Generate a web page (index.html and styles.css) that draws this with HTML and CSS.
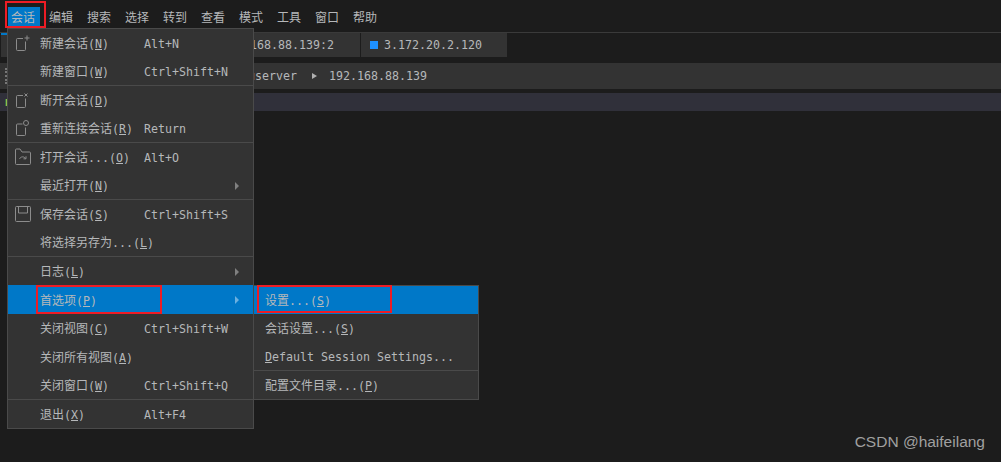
FILE: index.html
```html
<!DOCTYPE html>
<html lang="zh">
<head>
<meta charset="utf-8">
<title>会话菜单</title>
<link rel="stylesheet" href="styles.css">
</head>
<body>
<div class="app">
  <nav class="menubar">
    <span class="top active">会话</span><span class="top">编辑</span><span class="top">搜索</span><span class="top">选择</span><span class="top">转到</span><span class="top">查看</span><span class="top">模式</span><span class="top">工具</span><span class="top">窗口</span><span class="top">帮助</span>
  </nav>
  <div class="tabs">
    <div class="tab tab-active"></div>
    <div class="tab tab-first">192.168.88.139:2</div>
    <div class="tab tab-second"><i class="dot"></i>3.172.20.2.120</div>
  </div>
  <div class="crumbs"><i class="grip"></i><span>userver</span><i class="crumb-arrow"></i><span>192.168.88.139</span></div>
  <div class="current-line">r</div>
</div>

<div class="menu main-menu">
  <div class="item"><svg class="icon" viewBox="0 0 18 18"><path d="M8 4.500H2.500a1 1 0 0 0-1 1v10a1 1 0 0 0 1 1h7a1 1 0 0 0 1-1V7.500M12 1.500v5M9.500 4h5"/></svg><span class="label"><span class="zh">新建会话</span>(<u>N</u>)</span><span class="key">Alt+N</span></div>
  <div class="item"><span class="label"><span class="zh">新建窗口</span>(<u>W</u>)</span><span class="key">Ctrl+Shift+N</span></div>
  <div class="sep"></div>
  <div class="item"><svg class="icon" viewBox="0 0 18 18"><path d="M8 4.500H2.500a1 1 0 0 0-1 1v10a1 1 0 0 0 1 1h7a1 1 0 0 0 1-1V7.500M9.500 2.500l3 3M12.500 2.500l-3 3"/></svg><span class="label"><span class="zh">断开会话</span>(<u>D</u>)</span></div>
  <div class="item"><svg class="icon" viewBox="0 0 18 18"><path d="M7.500 5H2.500a1 1 0 0 0-1 1v9.500a1 1 0 0 0 1 1h7a1 1 0 0 0 1-1V8.500"/><circle cx="11" cy="4" r="2.500"/></svg><span class="label"><span class="zh">重新连接会话</span>(<u>R</u>)</span><span class="key">Return</span></div>
  <div class="sep"></div>
  <div class="item"><svg class="icon" viewBox="0 0 18 18"><path d="M.5 2a1 1 0 0 1 1-1h3.500l2 3h7.500a1 1 0 0 1 1 1v10.500a1 1 0 0 1-1 1H1.500a1 1 0 0 1-1-1zM4.500 11c1-2.500 4.500-3 6-.5M11 8.300v2.500H8.500"/></svg><span class="label"><span class="zh">打开会话</span>...(<u>O</u>)</span><span class="key">Alt+O</span></div>
  <div class="item"><span class="label"><span class="zh">最近打开</span>(<u>N</u>)</span><i class="arrow"></i></div>
  <div class="sep"></div>
  <div class="item"><svg class="icon" viewBox="0 0 18 18"><path d="M1.500 1.500h13a1 1 0 0 1 1 1v13a1 1 0 0 1-1 1h-13a1 1 0 0 1-1-1v-13a1 1 0 0 1 1-1zM3.500 1.500v6.500h9v-6.500"/></svg><span class="label"><span class="zh">保存会话</span>(<u>S</u>)</span><span class="key">Ctrl+Shift+S</span></div>
  <div class="item"><span class="label"><span class="zh">将选择另存为</span>...(<u>L</u>)</span></div>
  <div class="sep"></div>
  <div class="item"><span class="label"><span class="zh">日志</span>(<u>L</u>)</span><i class="arrow"></i></div>
  <div class="item selected"><span class="label"><span class="zh">首选项</span>(<u>P</u>)</span><i class="arrow"></i></div>
  <div class="item"><span class="label"><span class="zh">关闭视图</span>(<u>C</u>)</span><span class="key">Ctrl+Shift+W</span></div>
  <div class="item tall"><span class="label"><span class="zh">关闭所有视图</span>(<u>A</u>)</span></div>
  <div class="item"><span class="label"><span class="zh">关闭窗口</span>(<u>W</u>)</span><span class="key">Ctrl+Shift+Q</span></div>
  <div class="sep"></div>
  <div class="item"><span class="label"><span class="zh">退出</span>(<u>X</u>)</span><span class="key">Alt+F4</span></div>
</div>

<div class="menu sub-menu">
  <div class="item selected"><span class="label"><span class="zh">设置</span>...(<u>S</u>)</span></div>
  <div class="item"><span class="label"><span class="zh">会话设置</span>...(<u>S</u>)</span></div>
  <div class="item"><span class="label"><u>D</u>efault Session Settings...</span></div>
  <div class="sep"></div>
  <div class="item"><span class="label"><span class="zh">配置文件目录</span>...(<u>P</u>)</span></div>
</div>

<div class="mark mark-top"></div>
<div class="mark mark-pref"></div>
<div class="mark mark-settings"></div>
<div class="watermark">CSDN @haifeilang</div>
</body>
</html>
```
FILE: styles.css
```css
* { box-sizing: border-box; }
html, body { margin: 0; height: 100%; overflow: hidden; }
body {
  background: #1c1c1c;
  color: #b6b8ba;
  font-family: "DejaVu Sans Mono", "Noto Sans CJK SC", monospace;
  font-size: 11.63px;
  position: relative;
}
.zh { font-size: 12px; line-height: 1; font-family: "Noto Sans CJK SC", sans-serif; }

.menubar {
  height: 32px;
  display: flex;
  padding: 7px 0 0 6px;
  font-family: "Noto Sans CJK SC", sans-serif;
  font-size: 12px;
}
.top { width: 38px; height: 20px; line-height: 20px; padding-left: 5px; }
.top.active { background: #0078c8; width: 32px; margin: 0 4px 0 2px; padding-left: 3px; }

.tabs { height: 25px; border-top: 1px solid #3a3a3a; display: flex; padding-left: 1px; gap: 1px; }
.tab { background: #333333; height: 24px; line-height: 23px; display: flex; align-items: center; }
.tab-active { width: 100px; box-shadow: inset 0 2px 0 #0078c8; }
.tab-first { width: 258px; justify-content: flex-end; padding-right: 26px; }
.tab-second { width: 146px; padding-left: 9px; }
.dot { width: 8px; height: 8px; background: #1e90ff; margin-right: 6px; }

.crumbs {
  margin-top: 6px;
  height: 26px;
  background: #333333;
  display: flex;
  align-items: center;
  padding-left: 5px;
}
.grip { width: 2px; height: 16px; border-left: 2px dotted #777777; margin-right: 241px; }
.crumb-arrow {
  width: 0; height: 0;
  border-left: 5px solid #b0b0b0;
  border-top: 3px solid transparent;
  border-bottom: 3px solid transparent;
  margin: 0 12px 0 15px;
}
.current-line {
  margin-top: 4px;
  height: 18px;
  background: #30303a;
  color: #8fc04a;
  padding-left: 4px;
  line-height: 18px;
  font-weight: bold;
}

.menu {
  position: absolute;
  background: #333333;
  border: 1px solid #4a4a4a;
}
.main-menu { left: 7px; top: 28px; width: 247px; }
.sub-menu { left: 253px; top: 285px; width: 226px; }
.item {
  height: 28px;
  line-height: 16px;
  display: flex;
  align-items: center;
  padding-left: 32px;
  padding-top: 2px;
  position: relative;
}
.item.tall { height: 29px; padding-top: 3px; }
.main-menu .selected { height: 29px; background: #0078c8; }
.sub-menu .item { padding-left: 11px; }
.sub-menu .selected { background: #0078c8; }
.label { width: 104px; white-space: nowrap; flex: none; }
.sub-menu .label { width: auto; }
.key { white-space: nowrap; }
.sep { height: 1px; background: #4a4a4a; }
.arrow {
  position: absolute;
  right: 14px;
  top: 11px;
  width: 0; height: 0;
  border-left: 4px solid #808080;
  border-top: 4px solid transparent;
  border-bottom: 4px solid transparent;
}
.selected .arrow { border-left-color: #6cb0e0; }
.icon {
  position: absolute;
  left: 7px;
  top: 5px;
  width: 18px;
  height: 18px;
  fill: none;
  stroke: #8c8c8c;
  stroke-width: 1;
}

.mark { position: absolute; border: 2px solid #ee1c25; }
.mark-top { left: 5px; top: 1px; width: 41px; height: 27px; }
.mark-pref { left: 36px; top: 285px; width: 126px; height: 29px; }
.mark-settings { left: 257px; top: 285px; width: 135px; height: 28px; }

.watermark {
  position: absolute;
  right: 16px;
  top: 433px;
  font-family: "Liberation Sans", Arial, sans-serif;
  font-size: 15.5px;
  color: #a0a0a0;
  white-space: nowrap;
}
```
